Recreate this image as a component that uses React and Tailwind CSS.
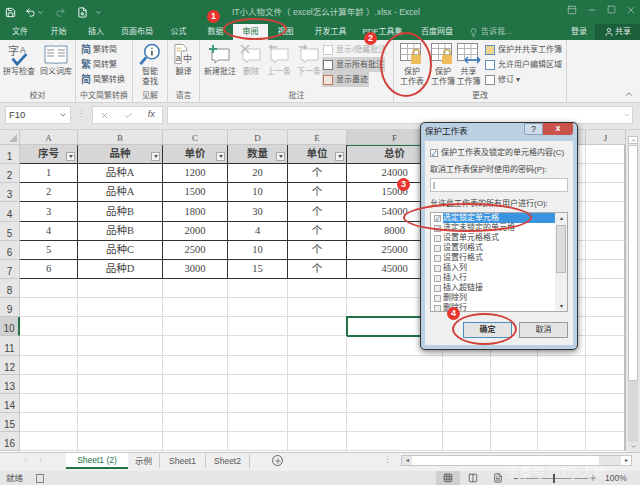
import { Undo2, Redo2, Save, FileSearch, Lightbulb, User, ChevronUp, ChevronDown, X, Check, Plus, Minus, Square, Grid3x3, Columns2, FileText, PanelTop } from 'lucide-react'

const font = "font-['Liberation_Sans','Noto_Sans_CJK_SC',sans-serif]"

const tabs = [
  ['文件', 'w-[40px]'], ['开始', 'w-[37px]'], ['插入', 'w-[38px]'], ['页面布局', 'w-[44px]'], ['公式', 'w-[39px]'], ['数据', 'w-[35px]'],
  ['审阅', 'w-[35px]'], ['视图', 'w-[35px]'], ['开发工具', 'w-[55px]'], ['PDF工具集', 'w-[49px]'], ['百度网盘', 'w-[60px]'],
]

const colWidths = [58, 85, 65, 60, 59, 96, 48, 47, 48, 40]
const colNames = ['A', 'B', 'C', 'D', 'E', 'F', 'G', 'H', 'I', 'J']
const heads = ['序号', '品种', '单价', '数量', '单位', '总价']
const rows = [
  [1, '品种A', 1200, 20, '个', 24000],
  [2, '品种A', 1500, 10, '个', 15000],
  [3, '品种B', 1800, 30, '个', 54000],
  [4, '品种B', 2000, 4, '个', 8000],
  [5, '品种C', 2500, 10, '个', 25000],
  [6, '品种D', 3000, 15, '个', 45000],
]
const perms = ['选定锁定单元格', '选定未锁定的单元格', '设置单元格格式', '设置列格式', '设置行格式', '插入列', '插入行', '插入超链接', '删除列', '删除行']

function Badge({ n, className }) {
  return <div className={`absolute w-[13px] h-[13px] rounded-full bg-[#e8352e] text-white text-[9px] font-bold flex items-center justify-center ${className}`}>{n}</div>
}

function Ring({ className }) {
  return <div className={`absolute rounded-[50%] border-2 border-[#d2403a] ${className}`} />
}

function SheetIcon({ lock, arrows }) {
  return (
    <svg width="24" height="23" viewBox="0 0 24 23">
      <rect x="0.5" y="0.5" width="20" height="17" fill="#fff" stroke="#8a8a8a" />
      <path d="M0.5 5.5H20.5M0.5 11.5H20.5M7.5 .5V17.5M14 .5V17.5" stroke="#b5b5b5" />
      {lock && <rect x="11" y="12" width="10" height="9" rx="1" fill="#eebc5a" />}
      {lock && <path d="M13 12V9.5a3 3 0 0 1 6 0V12" fill="none" stroke="#c9a24c" strokeWidth="1.5" />}
      {arrows && <path d="M8 17H23M8 17l3-3M8 17l3 3M23 17l-3-3M23 17l-3 3" fill="none" stroke="#3b7bbf" strokeWidth="1.5" />}
    </svg>
  )
}

function CommentIcon({ dim, mark }) {
  const c = dim ? '#c4c4c4' : '#8d8d8d'
  return (
    <svg width="22" height="22" viewBox="0 0 22 22">
      <path d="M3 5H20V16H9L6 19V16H3Z" fill="#fff" stroke={c} />
      {mark === 'plus' && <path d="M4 1V9M0 5H8" stroke="#3f9a76" strokeWidth="2" />}
      {mark === 'x' && <path d="M1 1L9 9M9 1L1 9" stroke="#bbb" strokeWidth="1.6" />}
      {mark === 'left' && <path d="M9 3H2M4 1L1.5 3L4 5" fill="none" stroke="#bbb" strokeWidth="1.4" />}
      {mark === 'right' && <path d="M1 3H8M6 1L8.5 3L6 5" fill="none" stroke="#bbb" strokeWidth="1.4" />}
    </svg>
  )
}

function Group({ label, width, border = true, children }) {
  return (
    <div className={`${width} h-full shrink-0 flex flex-col ${border ? 'border-r border-[#d4d4d4]' : ''}`}>
      <div className="flex-1 min-h-0 flex pt-[2px]">{children}</div>
      <div className="h-[13px] text-[8px] leading-[13px] text-center text-[#666] whitespace-nowrap">{label}</div>
    </div>
  )
}

function Big({ icon, label, width, dim }) {
  return (
    <div className={`${width} shrink-0 flex flex-col items-center text-[8px] leading-[9.5px] text-center ${dim ? 'text-[#aaa]' : 'text-[#555]'}`}>
      <div className="h-[25px] flex items-center justify-center">{icon}</div>
      <div className="whitespace-pre">{label}</div>
    </div>
  )
}

function Small({ color, label, dim, bg }) {
  return (
    <div className={`flex items-center gap-[3px] h-[15px] text-[8px] whitespace-nowrap px-[1px] self-start ${dim ? 'text-[#aaa]' : 'text-[#555]'} ${bg ? 'bg-[#d0d0d0]' : ''}`}>
      <span className={`w-[10px] h-[10px] shrink-0 border ${color}`} />
      {label}
    </div>
  )
}

function Ribbon() {
  return (
    <div className="h-[63px] shrink-0 bg-[#f3f3f3] flex border-b border-[#d4d4d4] relative">
      <Group label="校对" width="w-[76px]">
        <Big width="w-[38px]" label="拼写检查" icon={
          <svg width="24" height="24" viewBox="0 0 24 26"><text x="0" y="13" fontSize="12" fill="#666">字</text><text x="13" y="11" fontSize="9" fill="#666">A</text><path d="M5 17L10 23L20 12" fill="none" stroke="#2f6fb0" strokeWidth="3" /></svg>
        } />
        <Big width="w-[36px]" label="同义词库" icon={
          <svg width="24" height="22" viewBox="0 0 24 22"><path d="M1 2H11L12 3L13 2H23V19H13L12 20L11 19H1Z" fill="#fff" stroke="#6f8fb0" /><path d="M3 6H10M3 9H10M3 12H10M14 6H21M14 9H21M14 12H21" stroke="#8d8d8d" /></svg>
        } />
      </Group>
      <Group label="中文简繁转换" width="w-[57px]">
        <div className="flex flex-col pl-[5px]">
          {['繁转简', '简转繁', '简繁转换'].map((t, i) => (
            <div key={t} className="flex items-center gap-[1px] h-[15px] text-[8px] text-[#555] whitespace-nowrap">
              <span className="w-[11px] text-[10px] text-[#4a6d8c] font-bold">{i === 1 ? '繁' : '简'}</span>{t}
            </div>
          ))}
        </div>
      </Group>
      <Group label="见解" width="w-[35px]">
        <Big width="w-[34px]" label={'智能\n查找'} icon={
          <svg width="22" height="23" viewBox="0 0 22 24"><circle cx="13" cy="9" r="7.5" fill="#fff" stroke="#3d7ab8" strokeWidth="1.6" /><path d="M7 15L1 22" stroke="#3d7ab8" strokeWidth="3" /><path d="M13 5V6M13 8V13" stroke="#444" strokeWidth="1.6" /></svg>
        } />
      </Group>
      <Group label="语言" width="w-[32px]">
        <Big width="w-[31px]" label="翻译" icon={
          <svg width="20" height="23" viewBox="0 0 22 24"><path d="M1 1H10L14 5V8H8V22H1Z" fill="#fff" stroke="#999" /><path d="M3 5H8M3 8H7" stroke="#e0a94e" /><text x="2" y="19" fontSize="10" fill="#555">a</text><text x="10" y="20" fontSize="10" fill="#666">中</text></svg>
        } />
      </Group>
      <Group label="批注" width="w-[194px]">
        <Big width="w-[40px]" label="新建批注" icon={<CommentIcon mark="plus" />} />
        <Big width="w-[22px]" dim label="删除" icon={<CommentIcon dim mark="x" />} />
        <Big width="w-[34px]" dim label="上一条" icon={<CommentIcon dim mark="left" />} />
        <Big width="w-[26px]" dim label="下一条" icon={<CommentIcon dim mark="right" />} />
        <div className="flex flex-col">
          <Small dim color="border-[#ccc] bg-white" label="显示/隐藏批注" />
          <Small bg color="border-[#777] bg-white" label="显示所有批注" />
          <Small bg color="border-[#c2785a] bg-[#f2e2d8]" label="显示墨迹" />
        </div>
      </Group>
      <Group label="更改" width="w-[173px]">
        <Big width="w-[36px]" label={'保护\n工作表'} icon={<SheetIcon lock />} />
        <Big width="w-[26px]" label={'保护\n工作簿'} icon={<SheetIcon lock />} />
        <Big width="w-[25px]" label={'共享\n工作簿'} icon={<SheetIcon arrows />} />
        <div className="flex flex-col pl-[3px]">
          <Small color="border-[#5e8fc0] bg-[#f0d48a]" label="保护并共享工作簿" />
          <Small color="border-[#5e8fc0] bg-white" label="允许用户编辑区域" />
          <Small color="border-[#888] bg-white" label="修订 ▾" />
        </div>
      </Group>
      <ChevronUp size={10} className="absolute left-[624px] bottom-[3px] text-[#666]" />
    </div>
  )
}

function Sheet() {
  const rowNums = Array.from({ length: 16 }, (_, i) => i + 1)
  return (
    <div className="flex-1 min-h-0 flex bg-[#e6e6e6] overflow-hidden">
      <div className="w-[626px] shrink-0 overflow-hidden bg-white">
        <div className="flex h-[15px] bg-[#e6e6e6] border-b border-[#c8c8c8]">
          <div className="w-[20px] shrink-0 border-r border-[#c8c8c8] relative">
            <span className="absolute right-[2px] bottom-[2px] border-l-[8px] border-b-[8px] border-l-transparent border-b-[#b8b8b8]" />
          </div>
          {colNames.map((c, i) => (
            <div key={c} style={{ width: colWidths[i] }} className={`shrink-0 border-r border-[#c8c8c8] text-[9px] leading-[16px] text-center font-['Liberation_Serif',serif] text-[#555] ${c === 'F' ? 'bg-[#d2d2d2]' : ''}`}>{c}</div>
          ))}
        </div>
        {rowNums.map((n) => {
          const isHead = n === 1
          const data = rows[n - 2]
          const inTable = n <= 7
          return (
            <div key={n} className="flex h-[19.15px]">
              <div className={`w-[20px] shrink-0 border-b border-[#c8c8c8] text-[10px] leading-[12px] flex items-end justify-center text-[#444] ${n === 10 ? 'border-r-2 border-r-[#217346] bg-[#d2d2d2] text-[#1f7246]' : 'border-r bg-[#e6e6e6]'}`}>{n}</div>
              {colWidths.map((w, i) => {
                const table = inTable && i < 6
                const selected = n === 10 && i === 5
                return (
                  <div key={colNames[i]} style={{ width: w }} className={`relative shrink-0 flex items-center justify-center text-[10.5px] font-['Liberation_Serif','Noto_Sans_CJK_SC',serif] ${table ? 'border-r border-b border-[#333] text-[#444]' : 'border-r border-b border-[#dcdcdc]'} ${i === 9 ? 'border-r-2 border-r-[#bdbdbd]' : ''} ${isHead && table ? 'bg-[#d6d6d6] font-bold text-[#222]' : ''} ${selected ? 'outline-2 -outline-offset-1 outline-[#217346]' : ''}`}>
                    {isHead && table && heads[i]}
                    {isHead && i === 5 && <span className="absolute left-0 right-0 top-0 h-px bg-[#217346]" />}
                    {isHead && i < 5 && (
                      <span className="absolute right-[2px] bottom-[2px] w-[9px] h-[9px] bg-[#f2f2f2] border border-[#aaa] flex items-center justify-center">
                        <span className="border-x-[2px] border-t-[3px] border-x-transparent border-t-[#555]" />
                      </span>
                    )}
                    {!isHead && table && data && data[i]}
                  </div>
                )
              })}
            </div>
          )
        })}
      </div>
      <div className="flex-1 flex flex-col items-center pt-[6px] pb-[1px]">
        <div className="w-[10px] h-[8px] bg-white border border-[#c4c4c4] flex items-center justify-center"><ChevronUp size={7} className="text-[#555]" /></div>
        <div className="w-[10px] h-[236px] mt-[1px] bg-white border border-[#c4c4c4]" />
        <div className="flex-1 w-[10px] bg-[#d8d8d8]" />
        <div className="w-[10px] h-[9px] flex items-center justify-center"><ChevronDown size={7} className="text-[#555]" /></div>
      </div>
    </div>
  )
}

function Dialog() {
  return (
    <div className="absolute left-[420px] top-[122px] w-[158px] h-[228px] rounded-[5px] border border-[#333] bg-[#bcd0e4] px-[4px] pb-[4px] shadow-[0_2px_6px_rgba(0,0,0,0.5)] flex flex-col">
      <div className="h-[18px] shrink-0 flex items-start justify-between text-[8.5px] leading-[16px] text-[#222]">
        保护工作表
        <div className="flex">
          <span className="w-[19px] h-[12px] border border-[#8ba0b6] bg-[#cfdcea] rounded-bl-[3px] text-[9px] leading-[10px] text-center text-[#333]">?</span>
          <span className="w-[30px] h-[12px] bg-[#c9534a] rounded-br-[3px] text-white text-[9px] leading-[11px] text-center font-bold">x</span>
        </div>
      </div>
      <div className="flex-1 min-h-0 bg-[#f0f0f0] px-[5px] pt-[5px] text-[8px] leading-[12px] text-[#444] flex flex-col">
        <div className="flex items-center gap-[3px] h-[14px] whitespace-nowrap">
          <span className="w-[8px] h-[8px] border border-[#999] bg-white text-[7px] leading-[7px] text-center text-[#2a5a90]">✓</span>
          保护工作表及锁定的单元格内容(C)
        </div>
        <div className="mt-[4px] whitespace-nowrap">取消工作表保护时使用的密码(P):</div>
        <div className="mt-[2px] h-[14px] shrink-0 bg-white border border-[#c4c4c4] pl-[2px] leading-[11px]">|</div>
        <div className="mt-[6px] whitespace-nowrap">允许此工作表的所有用户进行(O):</div>
        <div className="mt-[2px] h-[100px] shrink-0 bg-white border border-[#aaa] flex overflow-hidden">
          <div className="flex-1 min-w-0">
            {perms.map((p, i) => (
              <div key={p} className="flex items-center gap-[2px] h-[10px] pl-[3px] whitespace-nowrap leading-[10px]">
                <span className="w-[7px] h-[7px] shrink-0 border border-[#aaa] bg-[#eee] text-[6px] leading-[6px] text-center text-[#2a5a90]">{i < 2 ? '✓' : ''}</span>
                <span className={i === 0 ? 'flex-1 bg-[#3b94e0] text-white' : ''}>{p}</span>
              </div>
            ))}
          </div>
          <div className="w-[12px] shrink-0 bg-[#f0f0f0] flex flex-col items-center text-[6px] leading-[10px] text-[#444]">
            <span>▴</span>
            <div className="w-[10px] h-[48px] mt-[2px] bg-[#dcdcdc] border border-[#bbb]" />
            <span className="mt-auto">▾</span>
          </div>
        </div>
        <div className="mt-[10px] flex justify-end gap-[7px]">
          <div className="w-[49px] h-[16px] border border-[#4a8fc0] bg-[#e4e4e4] leading-[14px] text-center font-bold text-[#333]">确定</div>
          <div className="w-[49px] h-[16px] border border-[#999] bg-[#e4e4e4] leading-[14px] text-center text-[#333]">取消</div>
        </div>
      </div>
    </div>
  )
}

export default function App() {
  return (
    <div className={`relative w-[640px] h-[485px] overflow-hidden flex flex-col bg-[#e6e6e6] ${font}`}>
      <div className="h-[24px] shrink-0 bg-[#217346] flex items-center text-white relative">
        <div className="flex items-center pl-[5px]">
          <Save size={11} />
          <Undo2 size={11} className="ml-[9px]" />
          <ChevronDown size={7} className="ml-[1px]" />
          <Redo2 size={11} className="ml-[11px] opacity-40" />
          <FileSearch size={11} className="ml-[11px]" />
          <ChevronDown size={7} className="ml-[7px]" />
        </div>
        <div className="absolute left-[232px] top-[6px] text-[8.5px] leading-[12px] text-[#b9d3c5] whitespace-nowrap">IT小人物文件（ excel怎么计算年龄 ）.xlsx - Excel</div>
        <div className="absolute left-[567px] top-[5px] flex gap-[10px] text-[#9fc2b0]">
          <PanelTop size={10} />
          <Minus size={10} />
          <Square size={9} />
          <X size={10} />
        </div>
      </div>
      <div className="h-[16px] shrink-0 bg-[#217346] flex text-[8px] text-[#dfeae4] relative">
        {tabs.map(([t, w]) => (
          <div key={t} className={`${w} h-[16px] shrink-0 text-center leading-[16px] whitespace-nowrap ${t === '审阅' ? 'bg-[#f3f3f3] text-[#217346]' : ''}`}>{t}</div>
        ))}
        <div className="flex items-center gap-[3px] ml-[2px] text-[#a9c8b8] whitespace-nowrap h-[16px]"><Lightbulb size={9} />告诉我...</div>
        <div className="absolute left-[571px] top-0 leading-[16px]">登录</div>
        <div className="absolute left-[595px] top-0 w-[45px] h-[16px] bg-[#1b5f3a] flex items-center justify-center gap-[1px]"><User size={10} />共享</div>
      </div>
      <Ribbon />
      <div className="h-[27px] shrink-0 bg-[#e6e6e6] flex items-center pl-[5px] pr-[7px] pb-[2px] border-b border-[#d0d0d0]">
        <div className="w-[66px] h-[18px] bg-white border border-[#d4d4d4] text-[9.5px] pl-[3px] pr-[3px] text-[#444] flex items-center justify-between">F10<ChevronDown size={8} /></div>
        <div className="w-[21px] text-center text-[#aaa] text-[9px]">⋮</div>
        <div className="w-[71px] h-[18px] bg-white border border-[#d4d4d4] flex items-center justify-around text-[#999]">
          <X size={9} /><Check size={9} /><span className="text-[9px] italic text-[#555]">fx</span>
        </div>
        <div className="flex-1 ml-[4px] h-[18px] bg-white border border-[#d4d4d4] flex items-center justify-end pr-[1px]"><ChevronDown size={8} className="text-[#aaa]" /></div>
      </div>
      <Sheet />
      <div className="h-[19px] shrink-0 bg-[#efefef] border-t border-[#c8c8c8] flex items-start text-[8.5px] text-[#555]">
        <div className="w-[66px] shrink-0 flex justify-center gap-[12px] text-[#bbb] leading-[15px]"><span>‹</span><span>›</span></div>
        <div className="w-[62px] h-[16px] shrink-0 bg-white border-b-2 border-[#217346] text-[#217346] text-center leading-[14px]">Sheet1 (2)</div>
        <div className="w-[32px] h-[14px] mt-[1px] shrink-0 border-r border-[#c8c8c8] text-center leading-[14px]">示例</div>
        <div className="w-[46px] h-[14px] mt-[1px] shrink-0 border-r border-[#c8c8c8] text-center leading-[14px]">Sheet1</div>
        <div className="w-[44px] h-[14px] mt-[1px] shrink-0 border-r border-[#c8c8c8] text-center leading-[14px]">Sheet2</div>
        <div className="ml-[22px] mt-[2px] w-[11px] h-[11px] rounded-full border border-[#666] flex items-center justify-center"><Plus size={8} /></div>
        <div className="ml-[100px] text-[#aaa] leading-[15px]">⋮</div>
        <div className="ml-[9px] mt-[2px] w-[231px] h-[11px] bg-[#e6e6e6] border border-[#c8c8c8] flex items-center text-[6px]">
          <span className="w-[10px] text-center">◂</span>
          <span className="w-[187px] h-full bg-white" />
          <span className="ml-auto w-[10px] h-full bg-white text-center leading-[9px]">▸</span>
        </div>
      </div>
      <div className="h-[14px] shrink-0 bg-[#e6e6e6] flex items-center text-[8.5px] text-[#555] relative">
        <span className="ml-[6px]">就绪</span>
        <span className="ml-[13px] w-[8px] h-[9px] border border-[#888]" />
        <div className="absolute left-[436px] top-0 h-[14px] w-[24px] bg-[#d0d0d0] flex items-center justify-center"><Grid3x3 size={10} /></div>
        <Columns2 size={10} className="absolute left-[468px] top-[2px]" />
        <FileText size={10} className="absolute left-[493px] top-[2px]" />
        <div className="absolute left-[514px] top-[7px] w-[4px] h-px bg-[#666]" />
        <div className="absolute left-[520px] top-[7px] w-[68px] h-px bg-[#999]" />
        <div className="absolute left-[553px] top-[3px] w-[2px] h-[9px] bg-[#555]" />
        <Plus size={8} className="absolute left-[589px] top-[3px]" />
        <span className="absolute left-[605px] leading-[14px]">100%</span>
      </div>
      <Dialog />
      <Badge n="1" className="left-[207px] top-[10px]" />
      <Badge n="2" className="left-[364px] top-[32px]" />
      <Badge n="3" className="left-[397px] top-[178px]" />
      <Badge n="4" className="left-[447px] top-[307px]" />
      <Ring className="left-[223px] top-[18px] w-[64px] h-[22px]" />
      <Ring className="left-[380px] top-[32px] w-[52px] h-[65px]" />
      <Ring className="left-[403px] top-[203px] w-[129px] h-[29px]" />
      <Ring className="left-[452px] top-[313px] w-[65px] h-[32px]" />
      <div className="absolute left-[506px] top-[464px] text-[13px] leading-[18px] text-white/60 whitespace-nowrap">头条号 / IT小人物</div>
    </div>
  )
}
